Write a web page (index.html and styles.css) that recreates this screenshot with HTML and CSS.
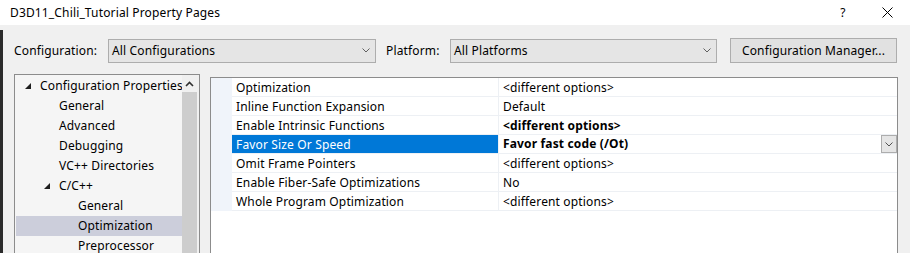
FILE: index.html
```html
<!DOCTYPE html>
<html lang="en">
<head>
  <meta charset="UTF-8">
  <title>D3D11_Chili_Tutorial Property Pages</title>
  <link rel="stylesheet" href="styles.css">
</head>
<body>
  <!-- Title bar -->
  <div class="titlebar">
    <span class="title">D3D11_Chili_Tutorial Property Pages</span>
    <span class="help">?</span>
    <span class="close">
      <svg width="11" height="11" viewBox="0 0 11 11"><path d="M0.5 0.5 L10.5 10.5 M10.5 0.5 L0.5 10.5" stroke="#000" stroke-width="1" fill="none"/></svg>
    </span>
  </div>

  <div class="frame">
    <!-- Configuration / platform row -->
    <div class="toolbar">
      <span class="cfg-label">Configuration:</span>
      <div class="combo combo-cfg">
        <span>All Configurations</span>
        <svg class="chev" width="8" height="5" viewBox="0 0 8 5"><path d="M0.5 0.5 L4 4 L7.5 0.5" stroke="#606060" fill="none"/></svg>
      </div>
      <span class="plat-label">Platform:</span>
      <div class="combo combo-plat">
        <span>All Platforms</span>
        <svg class="chev" width="8" height="5" viewBox="0 0 8 5"><path d="M0.5 0.5 L4 4 L7.5 0.5" stroke="#606060" fill="none"/></svg>
      </div>
      <button class="cfg-manager">Configuration Manager...</button>
    </div>

    <div class="panes">
      <!-- Category tree -->
      <div class="tree">
        <div class="tree-items">
          <div class="node lvl0"><svg class="tri" width="6" height="6" viewBox="0 0 6 6"><polygon points="6,0 6,6 0,6" fill="#1e1e1e"/></svg>Configuration Properties</div>
          <div class="node lvl1">General</div>
          <div class="node lvl1">Advanced</div>
          <div class="node lvl1">Debugging</div>
          <div class="node lvl1">VC++ Directories</div>
          <div class="node lvl1-open"><svg class="tri" width="6" height="6" viewBox="0 0 6 6"><polygon points="6,0 6,6 0,6" fill="#1e1e1e"/></svg>C/C++</div>
          <div class="node lvl2">General</div>
          <div class="node lvl2 selected">Optimization</div>
          <div class="node lvl2">Preprocessor</div>
        </div>
        <div class="scrollbar">
          <div class="arrow">
            <svg width="9" height="6" viewBox="0 0 9 6"><path d="M1 5 L4.5 1.5 L8 5" stroke="#303030" stroke-width="1.6" fill="none"/></svg>
          </div>
          <div class="thumb"></div>
        </div>
      </div>

      <!-- Property grid -->
      <div class="grid">
        <div class="row"><div class="gutter"></div><div class="name">Optimization</div><div class="value">&lt;different options&gt;</div></div>
        <div class="row"><div class="gutter"></div><div class="name">Inline Function Expansion</div><div class="value">Default</div></div>
        <div class="row"><div class="gutter"></div><div class="name">Enable Intrinsic Functions</div><div class="value bold">&lt;different options&gt;</div></div>
        <div class="row current"><div class="gutter"></div><div class="name">Favor Size Or Speed</div>
          <div class="value bold"><span class="val-text">Favor fast code (/Ot)</span>
            <span class="drop"><svg width="8" height="5" viewBox="0 0 8 5"><path d="M0.5 0.5 L4 4 L7.5 0.5" stroke="#505050" fill="none"/></svg></span>
          </div>
        </div>
        <div class="row"><div class="gutter"></div><div class="name">Omit Frame Pointers</div><div class="value">&lt;different options&gt;</div></div>
        <div class="row"><div class="gutter"></div><div class="name">Enable Fiber-Safe Optimizations</div><div class="value">No</div></div>
        <div class="row"><div class="gutter"></div><div class="name">Whole Program Optimization</div><div class="value">&lt;different options&gt;</div></div>
      </div>
    </div>
  </div>
</body>
</html>
```

FILE: styles.css
```css
* {
  box-sizing: border-box;
}
body {
  margin: 0;
  width: 910px;
  height: 253px;
  overflow: hidden;
  background: #f0f0f0;
  font-family: "Noto Sans", "Segoe UI", sans-serif;
  font-size: 12px;
  letter-spacing: 0.15px;
  color: #000;
}
/* Title bar */
.titlebar {
  height: 25px;
  background: #fff;
  display: flex;
  align-items: center;
  padding-left: 10px;
}
.title {
  flex: 1;
}
.help {
  width: 20px;
  text-align: center;
  margin-right: 12px;
}
.close {
  width: 45px;
  display: flex;
  justify-content: center;
}
/* Dialog body */
.frame {
  margin-top: 5px;
  height: 223px;
  border-left: 3px solid #2b2b2b;
  padding: 8px 0 0 11px;
}
.toolbar {
  display: flex;
  align-items: center;
  height: 25px;
}
.cfg-label {
  width: 94px;
}
.plat-label {
  width: 64px;
  margin-left: 10px;
}
.combo {
  height: 24px;
  display: flex;
  align-items: center;
  justify-content: space-between;
  border: 1px solid #adadad;
  background: #e5e5e5;
  padding: 0 5px 0 3px;
}
.combo-cfg {
  width: 268px;
}
.combo-plat {
  width: 267px;
}
.cfg-manager {
  margin-left: 13px;
  width: 167px;
  height: 25px;
  border: 1px solid #adadad;
  background: #e1e1e1;
  font-family: inherit;
  font-size: 12px;
  letter-spacing: inherit;
  color: #000;
  padding: 0;
}
.panes {
  display: flex;
  align-items: flex-start;
  margin-top: 11px;
}
/* Tree */
.tree {
  width: 186px;
  height: 200px;
  border: 1px solid #8c8c8c;
  background: #f5f5f5;
  display: flex;
}
.tree-items {
  width: 167px;
  padding: 1px 0 0 1px;
}
.node {
  height: 20px;
  line-height: 20px;
  white-space: nowrap;
  overflow: hidden;
  display: flex;
  align-items: center;
}
.tri {
  margin-right: 9px;
  flex: none;
}
.lvl0 {
  padding-left: 9px;
}
.lvl1 {
  padding-left: 43px;
}
.lvl1-open {
  padding-left: 28px;
}
.lvl2 {
  padding-left: 62px;
}
.node.selected {
  background: #cccedb;
}
.scrollbar {
  width: 17px;
  background: #f0f0f0;
  padding-right: 2px;
}
.arrow {
  height: 17px;
  display: flex;
  align-items: center;
  justify-content: center;
}
.thumb {
  height: 180px;
  background: #cdcdcd;
}
/* Property grid */
.grid {
  margin-left: 10px;
  margin-top: 3px;
  width: 688px;
  height: 200px;
  border: 1px solid #8c8c8c;
  background: #fff;
}
.row {
  display: flex;
  height: 19px;
}
.gutter {
  width: 21px;
  background: #f0f4fa;
}
.name {
  width: 267px;
  border-right: 1px solid #edf0f4;
  border-bottom: 1px solid #edf0f4;
  padding: 1px 0 0 4px;
  line-height: 18px;
  white-space: nowrap;
}
.value {
  flex: 1;
  border-bottom: 1px solid #edf0f4;
  padding: 1px 0 0 4px;
  line-height: 18px;
  display: flex;
  align-items: flex-start;
}
.value.bold {
  font-weight: bold;
}
.val-text {
  flex: 1;
}
.current .name {
  background: #0078d7;
  color: #fff;
}
.current .value {
  padding-top: 0;
  align-items: center;
}
.drop {
  width: 16px;
  height: 18px;
  border: 1px solid #adadad;
  background: #e5e5e5;
  display: flex;
  align-items: center;
  justify-content: center;
}
```
